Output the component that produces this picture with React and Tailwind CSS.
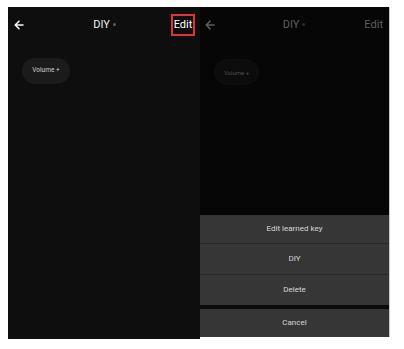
import React from "react";

function Arrow({ color }) {
  return (
    <svg width="10" height="10" viewBox="0 0 10 10" fill="none">
      <path d="M9 5H1.5M5 1.2L1.2 5L5 8.8" stroke={color} strokeWidth="1.6" strokeLinecap="round" strokeLinejoin="round" />
    </svg>
  );
}

export default function App() {
  return (
    <div className="w-[404px] h-[349px] bg-white overflow-hidden antialiased" style={{ fontFamily: "Roboto, 'Liberation Sans', sans-serif" }}>
      <div className="flex pt-[7px] pl-[8px]">
        {/* Left screen */}
        <div className="w-[192px] h-[332px] bg-[#0e0e0e] flex flex-col">
          <div className="h-[34px] grid grid-cols-[1fr_auto_1fr] items-center pl-[6px] pr-[5px] pt-[1px]">
            <div className="flex items-center"><Arrow color="#f2f2f2" /></div>
            <div className="flex items-center gap-[3px] text-[11px] text-[#eeeeee] leading-none">
              <span>DIY</span>
              <span className="w-[3px] h-[3px] rounded-full bg-[#5a5a5a]" />
            </div>
            <div className="flex justify-end">
              <div className="border-2 border-[#d9363a] w-[24px] h-[22px] flex items-center justify-center text-[11px] text-white leading-none">
                Edit
              </div>
            </div>
          </div>
          <div className="pl-[14px] pt-[17px]">
            <div className="w-[48px] h-[26px] rounded-full bg-[#1b1b1b] flex items-center justify-center text-[6.5px] text-[#cfcfcf]">
              Volume +
            </div>
          </div>
        </div>

        {/* Right screen */}
        <div className="w-[190px] h-[330px] bg-[#060606] flex flex-col border-r border-[#c8c8c8]">
          <div className="h-[34px] grid grid-cols-[1fr_auto_1fr] items-center pl-[5px] pr-[6px] pt-[1px]">
            <div className="flex items-center"><Arrow color="#5c5c5c" /></div>
            <div className="flex items-center gap-[3px] text-[11px] text-[#5e5e5e] leading-none">
              <span>DIY</span>
              <span className="w-[3px] h-[3px] rounded-full bg-[#2e2e2e]" />
            </div>
            <div className="flex justify-end text-[11px] text-[#5e5e5e] leading-none">Edit</div>
          </div>
          <div className="pl-[14px] pt-[18px]">
            <div className="w-[45px] h-[26px] rounded-full bg-[#0c0c0c] flex items-center justify-center text-[6px] text-[#505050]">
              Volume +
            </div>
          </div>
          <div className="flex-1" />
          <div className="flex flex-col text-[8px] text-[#d6d6d6]">
            <div className="h-[29px] bg-[#363636] flex items-center justify-center border-b border-[#2a2a2a]">Edit learned key</div>
            <div className="h-[31px] bg-[#363636] flex items-center justify-center border-b border-[#2a2a2a]">DIY</div>
            <div className="h-[30px] bg-[#363636] flex items-center justify-center">Delete</div>
            <div className="h-[4px] bg-[#0b0b0b]" />
            <div className="h-[28px] bg-[#363636] flex items-center justify-center">Cancel</div>
          </div>
        </div>
      </div>
    </div>
  );
}
